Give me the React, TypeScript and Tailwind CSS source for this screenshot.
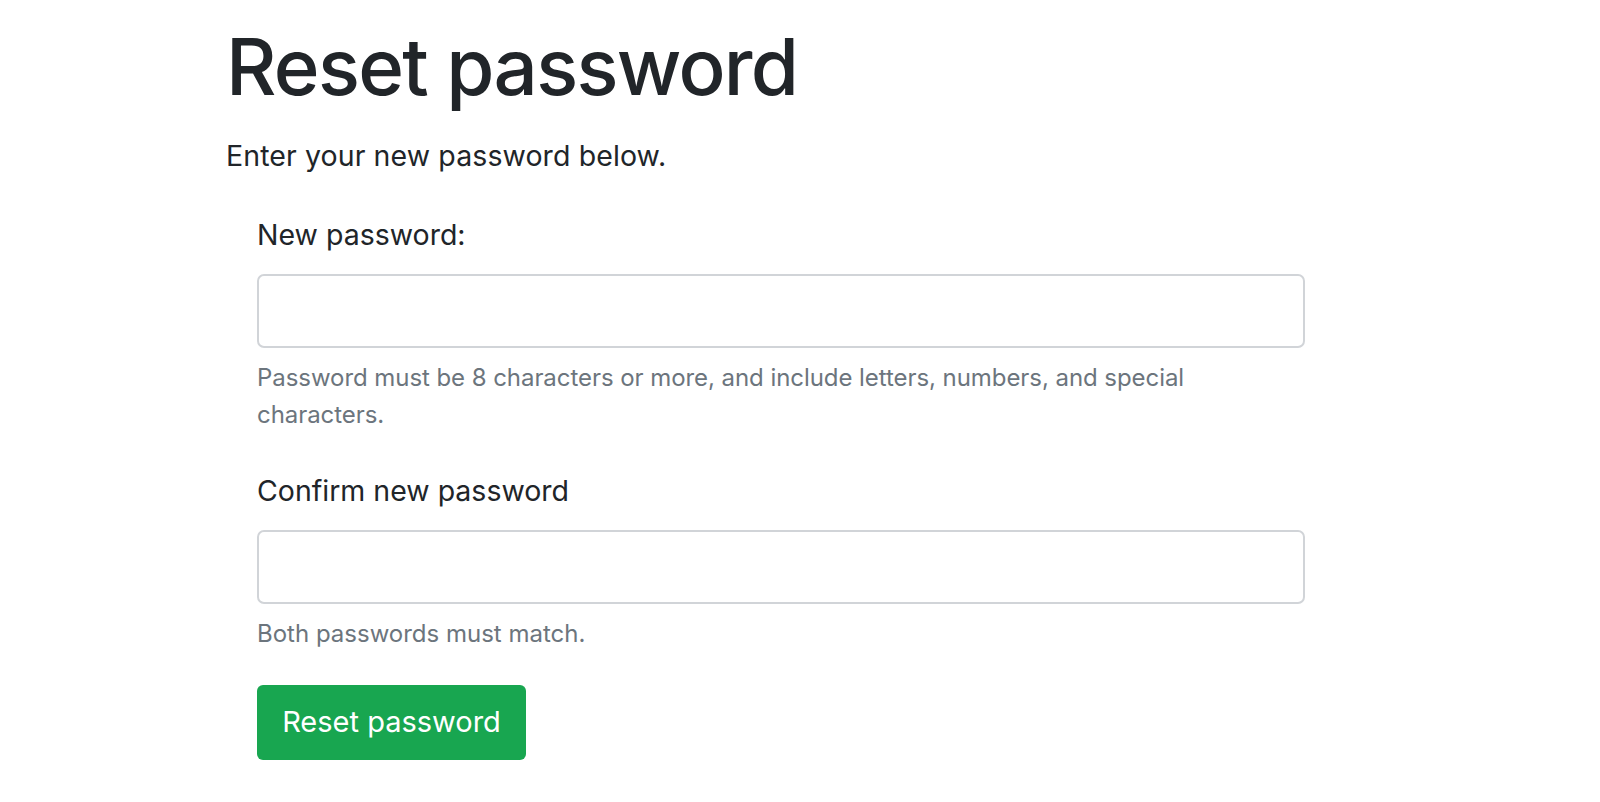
import React from 'react';

const App: React.FC = () => {
  return (
    <div className="min-h-screen bg-white font-['Inter',sans-serif] text-[#212529]">
      <div className="pl-[226px] pt-[28px]">
        <h1 className="text-[78px] leading-none font-medium tracking-[-1.7px]">Reset password</h1>
        <p className="mt-[30px] text-[28.5px] leading-[40.5px] tracking-[0.1px]">Enter your new password below.</p>

        <form className="mt-[40px] pl-[31px] w-[1079px]" onSubmit={e => e.preventDefault()}>
          <div>
            <label htmlFor="pw1" className="block text-[28.5px] leading-[36px]">New password:</label>
            <input
              id="pw1"
              type="password"
              className="mt-[21px] block w-[1048px] h-[74px] rounded-[7px] border-2 border-[#d1d4d8] bg-white px-4 outline-none"
            />
            <p className="mt-[11px] text-[24px] leading-[37px] tracking-[-0.06px] text-[#6c757d] w-[960px]">
              Password must be 8 characters or more, and include letters, numbers, and special characters.
            </p>
          </div>

          <div className="mt-[40px]">
            <label htmlFor="pw2" className="block text-[28.5px] leading-[36px]">Confirm new password</label>
            <input
              id="pw2"
              type="password"
              className="mt-[21px] block w-[1048px] h-[74px] rounded-[7px] border-2 border-[#d1d4d8] bg-white px-4 outline-none"
            />
            <p className="mt-[11px] text-[24px] leading-[37px] text-[#6c757d]">Both passwords must match.</p>
          </div>

          <button
            type="submit"
            className="mt-[33px] flex items-center justify-center w-[269px] h-[75px] rounded-[6px] bg-[#18a650] text-white text-[29px]"
          >
            Reset password
          </button>
        </form>
      </div>
    </div>
  );
};

export default App;
